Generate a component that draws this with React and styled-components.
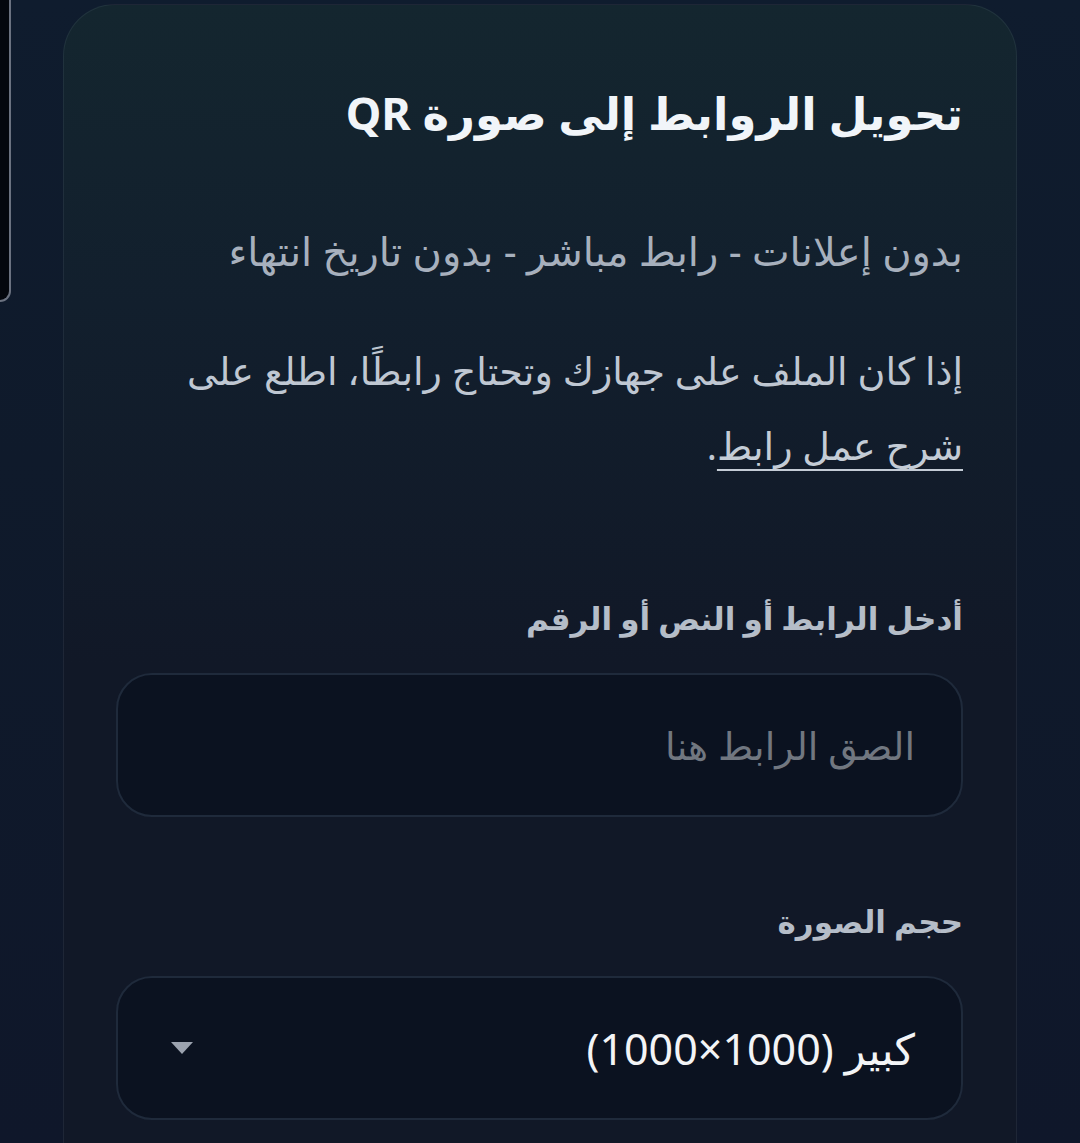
import React, { useState } from "react";
import styled, { createGlobalStyle } from "styled-components";

const GlobalStyle = createGlobalStyle`
  html, body {
    margin: 0;
    padding: 0;
    background: #0f1a2b;
  }
  body {
    font-family: "Noto Sans", "DejaVu Sans", sans-serif;
  }
`;

const Page = styled.div`
  position: relative;
  height: 1143px;
  overflow: hidden;
  background: linear-gradient(180deg, #0f1c2e 0%, #0f1a2b 40%, #0f172a 100%);
  padding: 4px 63px 0 63px;
  box-sizing: border-box;
  direction: rtl;
`;

const SideTab = styled.div`
  position: absolute;
  left: 0;
  top: -4px;
  width: 9px;
  height: 302px;
  background: #04070d;
  border: 2px solid #6b7280;
  border-left: none;
  border-radius: 0 0 12px 0;
`;

const Card = styled.section`
  min-height: 1200px;
  border-radius: 52px 52px 0 0;
  border: 1.5px solid rgba(148, 163, 184, 0.1);
  border-bottom: none;
  background: linear-gradient(180deg, #14262f 0%, #121f2d 25%, #111827 55%, #111827 100%);
  padding: 78px 53px 0 52px;
  box-sizing: border-box;
  display: flex;
  flex-direction: column;
`;

const Title = styled.h1`
  margin: 0;
  font-size: 45px;
  line-height: 60px;
  font-weight: 700;
  color: #f1f5f9;
`;

const Tagline = styled.p`
  margin: 83px 0 0;
  font-size: 40px;
  line-height: 50px;
  color: #a7b0bd;
`;

const Note = styled.p`
  margin: 57px 0 0;
  font-size: 38px;
  line-height: 75px;
  color: #bfc7d2;
`;

const Link = styled.a`
  color: #c4ccd6;
  white-space: nowrap;
  text-decoration: underline;
  text-underline-offset: 9px;
  text-decoration-thickness: 2px;
`;

const Field = styled.div`
  display: flex;
  flex-direction: column;
  margin-top: ${p => p.$top}px;
`;

const Label = styled.label`
  font-size: 31px;
  line-height: 50px;
  font-weight: 600;
  color: #b5bdc8;
  margin-bottom: 30px;
`;

const Input = styled.input`
  height: 144px;
  box-sizing: border-box;
  border-radius: 36px;
  border: 2px solid #1f2a3b;
  background: #0b1220;
  padding: 0 46px;
  font-family: inherit;
  font-size: 38px;
  color: #e5e7eb;
  direction: rtl;
  outline: none;
  &::placeholder {
    color: #717780;
  }
`;

const SelectBox = styled.div`
  height: 144px;
  box-sizing: border-box;
  border-radius: 36px;
  border: 2px solid #1f2a3b;
  background: #0b1220;
  padding: 0 46px 0 52px;
  display: flex;
  align-items: center;
  justify-content: space-between;
`;

const SelectValue = styled.span`
  font-size: 43px;
  color: #f3f4f6;
`;

const Caret = styled.svg`
  width: 24px;
  height: 14px;
  fill: #9ca3af;
`;

export default function App() {
  const [url, setUrl] = useState("");
  return (
    <>
      <GlobalStyle />
      <Page>
        <SideTab />
        <Card>
          <Title>تحويل الروابط إلى صورة QR</Title>
          <Tagline>بدون إعلانات - رابط مباشر - بدون تاريخ انتهاء</Tagline>
          <Note>
            إذا كان الملف على جهازك وتحتاج رابطًا، اطلع على{" "}
            <Link href="#">شرح عمل رابط</Link>.
          </Note>
          <Field $top={110}>
            <Label>أدخل الرابط أو النص أو الرقم</Label>
            <Input
              value={url}
              onChange={e => setUrl(e.target.value)}
              placeholder="الصق الرابط هنا"
            />
          </Field>
          <Field $top={79}>
            <Label>حجم الصورة</Label>
            <SelectBox>
              <SelectValue>كبير (1000×1000)</SelectValue>
              <Caret viewBox="0 0 24 14">
                <path d="M1 1h22L12 13z" />
              </Caret>
            </SelectBox>
          </Field>
        </Card>
      </Page>
    </>
  );
}
